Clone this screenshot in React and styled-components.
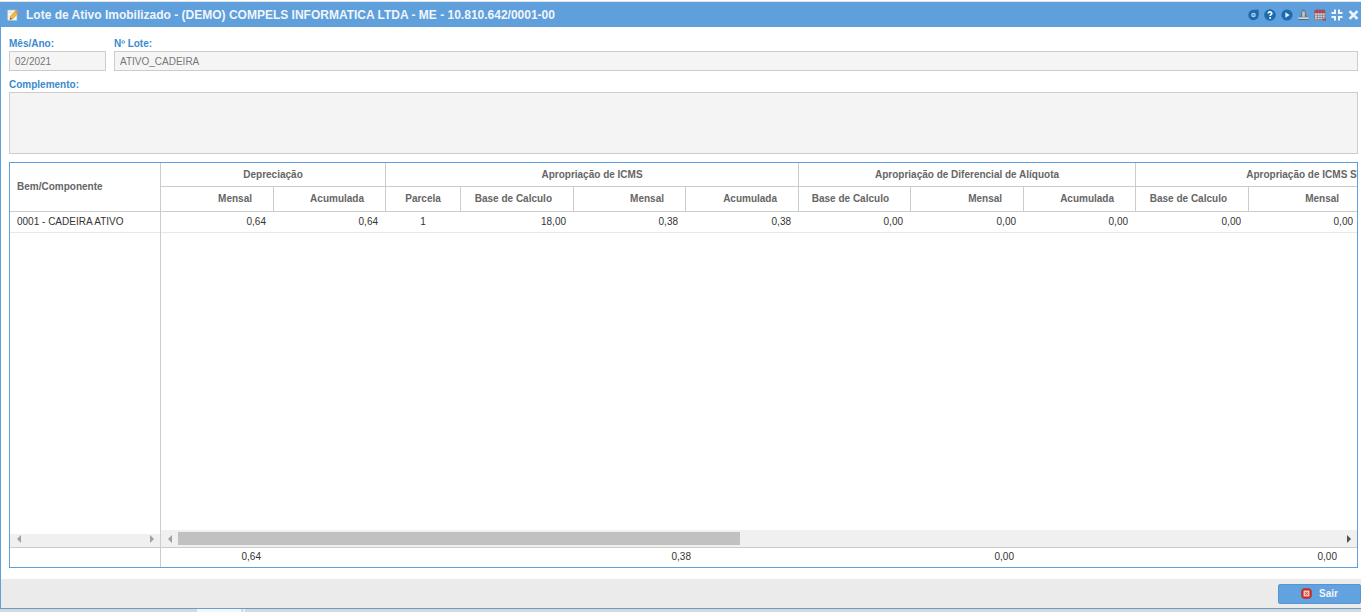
import styled, { createGlobalStyle } from 'styled-components';

const GlobalStyle = createGlobalStyle`
  * {
    box-sizing: border-box;
  }

  body {
    margin: 0;
    background-color: #fff;
    font-family: "Liberation Sans", Arial, sans-serif;
    font-size: 10px;
    color: #333;
  }
`;

const Page = styled.div`
  display: flex;
  flex-direction: column;
  height: 100vh;
  overflow: hidden;
`;

const TopEdge = styled.div`
  flex: none;
  height: 2px;
  border-bottom: 1px solid #e4e4e4;
`;

const Window = styled.main`
  display: flex;
  flex-direction: column;
  flex: 1;
  min-height: 0;
  border-left: 1px solid #5f9fdb;
  border-bottom: 1px solid #5f9fdb;
`;

const TitleBar = styled.header`
  display: flex;
  align-items: center;
  justify-content: space-between;
  flex: none;
  height: 25px;
  padding: 0 2px 0 6px;
  background-color: #5f9fdb;
`;

const TitleGroup = styled.div`
  display: flex;
  align-items: center;
  gap: 7px;
`;

const Title = styled.h1`
  margin: 0;
  font-size: 12px;
  line-height: 16px;
  color: #f0f5fa;
  white-space: nowrap;
`;

const Tools = styled.div`
  display: flex;
  align-items: center;
  gap: 5px;
`;

const ToolButton = styled.button`
  display: flex;
  width: ${({ $width }) => $width || 12}px;
  height: 12px;
  padding: 0;
  border: 0;
  background: none;
  cursor: pointer;
`;

const Content = styled.div`
  display: flex;
  flex-direction: column;
  flex: 1;
  min-height: 0;
  gap: 8px;
  padding: 11px 3px 11px 8px;
`;

const Fields = styled.div`
  display: flex;
  gap: 8px;
`;

const Field = styled.div`
  display: flex;
  flex-direction: column;
  flex: ${({ $width }) => ($width ? `none` : 1)};
  width: ${({ $width }) => ($width ? `${$width}px` : 'auto')};
  gap: 1px;
`;

const Label = styled.label`
  font-weight: bold;
  line-height: 12px;
  color: #3a8bce;
`;

const Input = styled.input`
  width: 100%;
  height: 20px;
  padding: 0 5px;
  border: 1px solid #ccc;
  border-radius: 0;
  outline: none;
  background-color: #f5f5f5;
  font-family: inherit;
  font-size: 10px;
  color: #777;
`;

const TextArea = styled.textarea`
  display: block;
  width: 100%;
  height: 62px;
  padding: 4px 5px;
  border: 1px solid #ccc;
  border-radius: 0;
  outline: none;
  resize: none;
  background-color: #f4f4f4;
  font-family: inherit;
  font-size: 10px;
`;

const Grid = styled.section`
  display: flex;
  flex: 1;
  min-height: 0;
  border: 1px solid #5f9fdb;
`;

const Panel = styled.div`
  display: flex;
  flex-direction: column;
  flex: ${({ $width }) => ($width ? 'none' : 1)};
  width: ${({ $width }) => ($width ? `${$width}px` : 'auto')};
  min-width: 0;
  border-right: ${({ $width }) => ($width ? '1px solid #ccc' : '0')};
`;

const Viewport = styled.div`
  flex: 1;
  min-height: 0;
  overflow: hidden;
`;

const Table = styled.table`
  width: ${({ $width }) => ($width ? `${$width}px` : '100%')};
  table-layout: fixed;
  border-collapse: separate;
  border-spacing: 0;
  white-space: nowrap;
`;

const Th = styled.th`
  height: ${({ $height }) => $height}px;
  padding: 0 ${({ $align }) => ($align === 'right' ? 21 : 7)}px 0 7px;
  border-right: ${({ $last }) => ($last ? '0' : '1px solid #ccc')};
  border-bottom: 1px solid #ccc;
  text-align: ${({ $align }) => $align || 'center'};
  line-height: 12px;
  color: #666;
`;

const Td = styled.td`
  height: 21px;
  padding: 0 8px 0 7px;
  border-bottom: 1px solid #e8e8e8;
  text-align: ${({ $align }) => $align || 'right'};
  line-height: 12px;
`;

const ScrollBar = styled.div`
  display: flex;
  align-items: flex-end;
  flex: none;
  height: ${({ $height }) => $height}px;
  background-color: #f0f0f0;
`;

const ScrollButton = styled.button`
  display: flex;
  align-items: center;
  justify-content: center;
  width: 17px;
  height: 17px;
  padding: 0;
  border: 0;
  background: none;
  color: ${({ $active }) => ($active ? '#505050' : '#a0a0a0')};
`;

const Track = styled.div`
  flex: 1;
  align-self: stretch;
  padding: 2px 0;
`;

const Thumb = styled.div`
  width: 48.4%;
  height: 13px;
  background-color: #c1c1c1;
`;

const Totals = styled.div`
  display: flex;
  flex: none;
  height: 20px;
  overflow: hidden;
  border-top: 1px solid #ccc;
`;

const Total = styled.span`
  flex: none;
  width: ${({ $width }) => $width}px;
  padding-right: 8px;
  text-align: right;
  line-height: 18px;
`;

const Footer = styled.footer`
  display: flex;
  align-items: center;
  justify-content: flex-end;
  flex: none;
  height: 29px;
  background-color: #ebebeb;
`;

const ExitButton = styled.button`
  display: flex;
  align-items: center;
  justify-content: center;
  gap: 7px;
  width: 83px;
  height: 20px;
  padding: 0;
  border: 1px solid #5696d3;
  border-radius: 2px;
  background-color: #62a2df;
  font-family: inherit;
  font-size: 10px;
  font-weight: bold;
  color: #eef4fa;
  cursor: pointer;
`;

const BottomEdge = styled.div`
  display: flex;
  flex: none;
  gap: 2px;
  height: 3px;
  padding-left: 197px;
  background-color: #d8d8d6;
`;

const ActiveTab = styled.div`
  width: 44px;
  background-color: #f4f6f8;
`;

const TabDivider = styled.div`
  width: 2px;
  background-color: #ececec;
`;

const EditIcon = () => (
  <svg width="12" height="12" viewBox="0 0 12 12">
    <path d="M.8 1.2h9v10h-9z" fill="#f8f6ee" stroke="#d9d5c8" strokeWidth="0.6" />
    <path d="M2.2 3.6h3" stroke="#c9d2da" strokeWidth="0.8" />
    <path d="M3.4 7.2 9 1.3l2.6 2.3-5.6 6-3 1z" fill="#f0b93f" stroke="#b58a3a" strokeWidth="0.5" />
    <path d="M9 1.3l2.6 2.3-1.1 1.2-2.6-2.3z" fill="#d68a6b" />
    <path d="M3 10.6l.6-1.8 1.2 1.1z" fill="#333" />
  </svg>
);

const RecordIcon = () => (
  <svg width="11" height="12" viewBox="0 0 11 12">
    <path d="M5.5.8h5.2v5.3A5.2 5.2 0 1 1 5.5.8z" fill="#1f69ae" />
    <circle cx="5.5" cy="6" r="2.3" fill="#b5d4ee" />
    <path d="M4.3 6h2.4" stroke="#1f69ae" strokeWidth="1" />
  </svg>
);

const HelpIcon = () => (
  <svg width="12" height="12" viewBox="0 0 12 12">
    <circle cx="6" cy="6" r="5.8" fill="#1b6cab" />
    <path d="M4.2 4.6c0-2.3 3.6-2.2 3.6-.2 0 1.3-1.7 1.3-1.7 2.7" fill="none" stroke="#fff" strokeWidth="1.6" />
    <circle cx="6.1" cy="9" r="1" fill="#fff" />
  </svg>
);

const PlayIcon = () => (
  <svg width="12" height="12" viewBox="0 0 12 12">
    <circle cx="6" cy="6" r="5.6" fill="#1f69ae" />
    <path d="M4.4 3.2 8.6 6 4.4 8.8z" fill="#e4f0fa" />
  </svg>
);

const BellIcon = () => (
  <svg width="11" height="12" viewBox="0 0 11 12">
    <path d="M5.5.6c1.6 0 2.4 1.4 2.4 3 0 2.2.6 3.6 2 4.8H1.1c1.4-1.2 2-2.6 2-4.8 0-1.6.8-3 2.4-3z" fill="#6a7683" />
    <path d="M4.2 2.4v5.4h2.6V2.4z" fill="#bcc6ce" />
    <path d="M.5 8.4h10v1.6H.5z" fill="#d5dade" />
    <path d="M.5 10h10v1H.5z" fill="#566877" />
  </svg>
);

const CalendarIcon = () => (
  <svg width="12" height="12" viewBox="0 0 12 12">
    <path d="M.5 1.3h10.6v9.4H.5z" fill="#d5d0d6" stroke="#83788a" strokeWidth="0.9" />
    <path d="M.5 1.3h10.6v3H.5z" fill="#b4474d" />
    <path d="M3 .2v2M6 .2v2M9 .2v2" stroke="#6b5560" strokeWidth="0.9" />
    <path d="M1 6.4h10M1 8.5h10M3.5 4.5v6M6 4.5v6M8.5 4.5v6" stroke="#857e8d" strokeWidth="0.7" />
    <path d="M8.6 9.6H12v2H8.6z" fill="#a24c56" />
  </svg>
);

const CompressIcon = () => (
  <svg width="12" height="12" viewBox="0 0 12 12">
    <path d="M4 .5V4H.5M8 .5V4h3.5M4 11.5V8H.5M8 11.5V8h3.5" fill="none" stroke="#eef4fa" strokeWidth="2" />
  </svg>
);

const CloseIcon = () => (
  <svg width="11" height="12" viewBox="0 0 11 12">
    <path d="M1.6 2.1l7.8 7.8M9.4 2.1 1.6 9.9" stroke="#eef4fa" strokeWidth="2.7" />
  </svg>
);

const ExitIcon = () => (
  <svg width="11" height="11" viewBox="0 0 11 11">
    <rect x="0.4" y="0.4" width="10.2" height="10.2" rx="3.6" fill="#d3261c" stroke="#9a4a50" strokeWidth="0.8" />
    <rect x="3" y="3" width="5" height="5" fill="#eea59f" stroke="#fbe9e7" strokeWidth="0.8" />
    <path d="M4 4l3 3M7 4 4 7" stroke="#d8463d" strokeWidth="0.7" />
  </svg>
);

const Arrow = ({ right }) => (
  <svg width="4" height="8" viewBox="0 0 4 8">
    <path d={right ? 'M0 0l4 4-4 4z' : 'M4 0 0 4l4 4z'} fill="currentColor" />
  </svg>
);

const tools = [
  { label: 'Gravar', icon: <RecordIcon />, width: 11 },
  { label: 'Ajuda', icon: <HelpIcon /> },
  { label: 'Executar', icon: <PlayIcon /> },
  { label: 'Avisos', icon: <BellIcon />, width: 11 },
  { label: 'Agenda', icon: <CalendarIcon /> },
  { label: 'Restaurar', icon: <CompressIcon /> },
  { label: 'Fechar', icon: <CloseIcon />, width: 11 },
];

const groups = [
  { name: 'Depreciação', span: 2 },
  { name: 'Apropriação de ICMS', span: 4 },
  { name: 'Apropriação de Diferencial de Alíquota', span: 3 },
  { name: 'Apropriação de ICMS ST', span: 3 },
];

const columns = [
  { name: 'Mensal', width: 113, value: '0,64' },
  { name: 'Acumulada', width: 112, value: '0,64' },
  { name: 'Parcela', width: 75, value: '1', align: 'center' },
  { name: 'Base de Calculo', width: 113, value: '18,00' },
  { name: 'Mensal', width: 112, value: '0,38' },
  { name: 'Acumulada', width: 113, value: '0,38' },
  { name: 'Base de Calculo', width: 112, value: '0,00' },
  { name: 'Mensal', width: 113, value: '0,00' },
  { name: 'Acumulada', width: 112, value: '0,00' },
  { name: 'Base de Calculo', width: 113, value: '0,00' },
  { name: 'Mensal', width: 112, value: '0,00' },
  { name: 'Acumulada', width: 113, value: '0,00' },
];

const totals = [
  { value: '0,64', width: 108 },
  { value: '0,38', width: 430 },
  { value: '0,00', width: 323 },
  { value: '0,00', width: 323 },
];

const tableWidth = columns.reduce((sum, column) => sum + column.width, 0);

const AssetGrid = () => (
  <Grid>
    <Panel $width={151}>
      <Viewport>
        <Table>
          <thead>
            <tr>
              <Th $height={49} $align="left" $last>
                Bem/Componente
              </Th>
            </tr>
          </thead>
          <tbody>
            <tr>
              <Td $align="left">0001 - CADEIRA ATIVO</Td>
            </tr>
          </tbody>
        </Table>
      </Viewport>
      <ScrollBar $height={13}>
        <ScrollButton aria-label="Rolar para a esquerda">
          <Arrow />
        </ScrollButton>
        <Track />
        <ScrollButton aria-label="Rolar para a direita">
          <Arrow right />
        </ScrollButton>
      </ScrollBar>
      <Totals />
    </Panel>
    <Panel>
      <Viewport>
        <Table $width={tableWidth}>
          <colgroup>
            {columns.map((column, i) => (
              <col key={i} width={column.width} />
            ))}
          </colgroup>
          <thead>
            <tr>
              {groups.map((group) => (
                <Th key={group.name} colSpan={group.span} $height={24}>
                  {group.name}
                </Th>
              ))}
            </tr>
            <tr>
              {columns.map((column, i) => (
                <Th key={i} $height={25} $align={column.align || 'right'}>
                  {column.name}
                </Th>
              ))}
            </tr>
          </thead>
          <tbody>
            <tr>
              {columns.map((column, i) => (
                <Td key={i} $align={column.align}>
                  {column.value}
                </Td>
              ))}
            </tr>
          </tbody>
        </Table>
      </Viewport>
      <ScrollBar $height={17}>
        <ScrollButton aria-label="Rolar para a esquerda">
          <Arrow />
        </ScrollButton>
        <Track>
          <Thumb />
        </Track>
        <ScrollButton aria-label="Rolar para a direita" $active>
          <Arrow right />
        </ScrollButton>
      </ScrollBar>
      <Totals>
        {totals.map((total, i) => (
          <Total key={i} $width={total.width}>
            {total.value}
          </Total>
        ))}
      </Totals>
    </Panel>
  </Grid>
);

export default function App() {
  return (
    <>
      <GlobalStyle />
      <Page>
        <TopEdge />
        <Window>
          <TitleBar>
            <TitleGroup>
              <EditIcon />
              <Title>Lote de Ativo Imobilizado - (DEMO) COMPELS INFORMATICA LTDA - ME - 10.810.642/0001-00</Title>
            </TitleGroup>
            <Tools>
              {tools.map((tool) => (
                <ToolButton key={tool.label} aria-label={tool.label} $width={tool.width}>
                  {tool.icon}
                </ToolButton>
              ))}
            </Tools>
          </TitleBar>
          <Content>
            <Fields>
              <Field $width={97}>
                <Label htmlFor="mes">Mês/Ano:</Label>
                <Input id="mes" defaultValue="02/2021" readOnly />
              </Field>
              <Field>
                <Label htmlFor="lote">Nº Lote:</Label>
                <Input id="lote" defaultValue="ATIVO_CADEIRA" readOnly />
              </Field>
            </Fields>
            <Fields>
              <Field>
                <Label htmlFor="complemento">Complemento:</Label>
                <TextArea id="complemento" readOnly />
              </Field>
            </Fields>
            <AssetGrid />
          </Content>
          <Footer>
            <ExitButton>
              <ExitIcon />
              Sair
            </ExitButton>
          </Footer>
        </Window>
        <BottomEdge>
          <ActiveTab />
          <TabDivider />
        </BottomEdge>
      </Page>
    </>
  );
}
